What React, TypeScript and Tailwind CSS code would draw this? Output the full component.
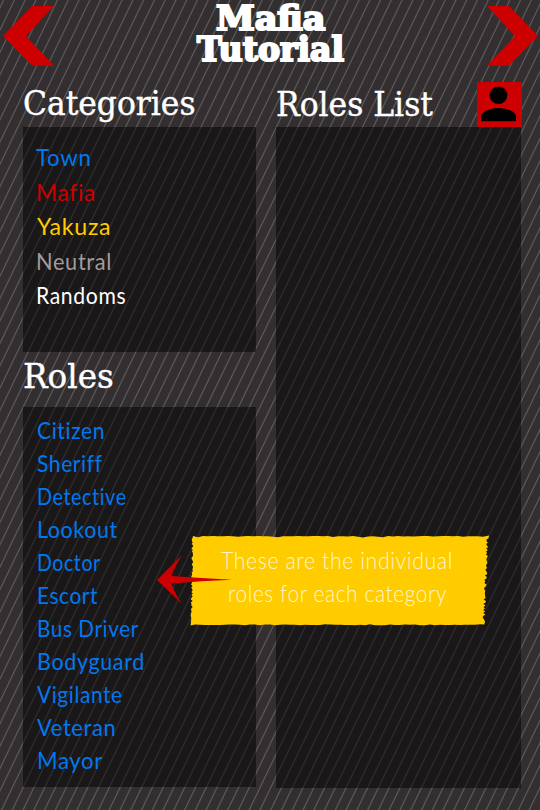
import { useLayoutEffect, useRef } from "react";

// Text stretched horizontally to an exact width.
function Fit({ text, width, className = "" }: { text: string; width: number; className?: string }) {
  const ref = useRef<HTMLSpanElement>(null);
  useLayoutEffect(() => {
    const el = ref.current;
    if (el) el.style.transform = `scaleX(${width / el.offsetWidth})`;
  }, [width, text]);
  return (
    <span className="block" style={{ width }}>
      <span ref={ref} className={`inline-block origin-left whitespace-nowrap align-top ${className}`}>
        {text}
      </span>
    </span>
  );
}

const categories = [
  { text: "Town", width: 56, color: "text-[#0078f0]", pad: "pl-[13px]" },
  { text: "Mafia", width: 60, color: "text-[#cc0000]", pad: "pl-[13px]" },
  { text: "Yakuza", width: 74, color: "text-[#ffcc00]", pad: "pl-[14px]" },
  { text: "Neutral", width: 76, color: "text-[#a39b9b]", pad: "pl-[13px]" },
  { text: "Randoms", width: 90, color: "text-white", pad: "pl-[13px]" },
];

const roles = [
  { text: "Citizen", width: 68 },
  { text: "Sheriff", width: 66 },
  { text: "Detective", width: 90 },
  { text: "Lookout", width: 81 },
  { text: "Doctor", width: 64 },
  { text: "Escort", width: 61 },
  { text: "Bus Driver", width: 102 },
  { text: "Bodyguard", width: 108 },
  { text: "Vigilante", width: 86 },
  { text: "Veteran", width: 79 },
  { text: "Mayor", width: 66 },
];

const sans = "font-['Lato',sans-serif] text-[23.5px] tracking-[0.7px]";
const heading =
  "font-['DejaVu_Serif',serif] text-[33px] leading-[40px] text-white [-webkit-text-stroke:0.4px_white]";
const title =
  "font-['DejaVu_Serif',serif] font-bold text-[34px] leading-[31px] text-white [-webkit-text-stroke:2.2px_white]";
const panel = "bg-black/50";

// Outline of the torn paper: nearly straight long edges, ragged short ones.
function tornPaper() {
  const pts: string[] = [];
  const n = (i: number) => {
    const v = Math.sin(i * 127.1 + 11.7) * 43758.5453;
    return v - Math.floor(v);
  };
  for (let x = 3; x < 298; x += 5) pts.push(`${x},${1 + n(x) * n(x + 7) * 1.6}`);
  pts.push("299,0.5");
  for (let y = 3; y < 89; y += 1.5) pts.push(`${299 - y * 0.045 - n(y + 500) * 2.8},${y}`);
  pts.push("294.5,89.5");
  for (let x = 290; x > 2; x -= 5) pts.push(`${x},${90.3 - n(x + 900) * n(x + 907) * 1.6}`);
  pts.push("0.5,90.5");
  for (let y = 87; y > 2; y -= 1.5) pts.push(`${0.5 + (88 - y) * 0.012 + n(y + 1300) * 2},${y}`);
  return pts.join(" ");
}

function Chevron({ flip = false }: { flip?: boolean }) {
  return (
    <svg width="52" height="60" viewBox="0 0 52 60" className={flip ? "-scale-x-100" : ""}>
      <path d="M29 0H51L23 30L51 59.7H29L0 30Z" fill="#cc0000" />
    </svg>
  );
}

export default function App() {
  return (
    <div className="relative flex h-[810px] w-[540px] flex-col overflow-hidden bg-[#332f30] bg-[repeating-linear-gradient(115.7deg,transparent_0px,transparent_2.2px,#5a5657_3.1px,#5a5657_3.5px,transparent_4.4px,transparent_9.704px)]">
      <header className="flex h-[82px] shrink-0 justify-between pl-[3px] pr-[2px]">
        <div className="pt-[6px]"><Chevron /></div>
        <h1 className="flex flex-col items-center pt-[3px]">
          <Fit text="Mafia" width={109} className={title} />
          <Fit text="Tutorial" width={147} className={title} />
        </h1>
        <div className="pt-[6px]"><Chevron flip /></div>
      </header>

      <main className="flex pl-[23px]">
        <section className="w-[233px]">
          <h2 className="h-[45px] pt-[2px]"><Fit text="Categories" width={173} className={heading} /></h2>
          <ul className={`${panel} ${sans} h-[225px] pt-[13px] leading-[34.6px]`}>
            {categories.map((c) => (
              <li key={c.text} className={`h-[34.6px] ${c.color} ${c.pad}`}>
                <Fit text={c.text} width={c.width} />
              </li>
            ))}
          </ul>
          <h2 className="h-[54.5px] pt-[5px]"><Fit text="Roles" width={91} className={heading} /></h2>
          <ul className={`${panel} ${sans} h-[380.5px] pl-[14px] pt-[7px] leading-[33px] text-[#0078f0]`}>
            {roles.map((r) => (
              <li key={r.text} className="h-[33px]"><Fit text={r.text} width={r.width} /></li>
            ))}
          </ul>
        </section>

        <section className="ml-5 w-[246px]">
          <div className="flex h-[45px] justify-between">
            <h2 className="pt-[3px]"><Fit text="Roles List" width={157} className={heading} /></h2>
            <svg width="45" height="45" viewBox="0 0 45 45">
              <path d="M0 0H45V45H0Z" fill="#cc0000" />
              <circle cx="21.5" cy="13.2" r="8.8" />
              <path d="M4.2 39.2V34.5C4.2 29 14.7 26 21.5 26S38.9 29 38.9 34.5V39.2Z" />
            </svg>
          </div>
          <div className={`${panel} h-[661px] w-[245px]`} />
        </section>
      </main>

      <div className="absolute left-[190px] top-[535px] h-[92px] w-[300px]">
        <svg width="300" height="92" viewBox="0 0 300 92" className="absolute inset-0">
          <polygon points={tornPaper()} fill="#ffcc00" />
        </svg>
        <div className="relative flex flex-col pl-[31px] pt-[9px] font-['Lato',sans-serif] text-[23.5px] font-light leading-[33px] tracking-[0.7px] text-[#fff6cf]">
          <Fit text="These are the individual" width={232} />
          <div className="pl-[7px]"><Fit text="roles for each category" width={219} /></div>
        </div>
        <svg width="76" height="52" viewBox="0 0 76 52" className="absolute -left-[33px] top-[19px]">
          <path d="M0 26L25 1Q18 12 14.5 22L45 24L75 25.8L45 27.2L14.5 29.5Q18 40 25 50Z" fill="#cc0000" />
        </svg>
      </div>
    </div>
  );
}
